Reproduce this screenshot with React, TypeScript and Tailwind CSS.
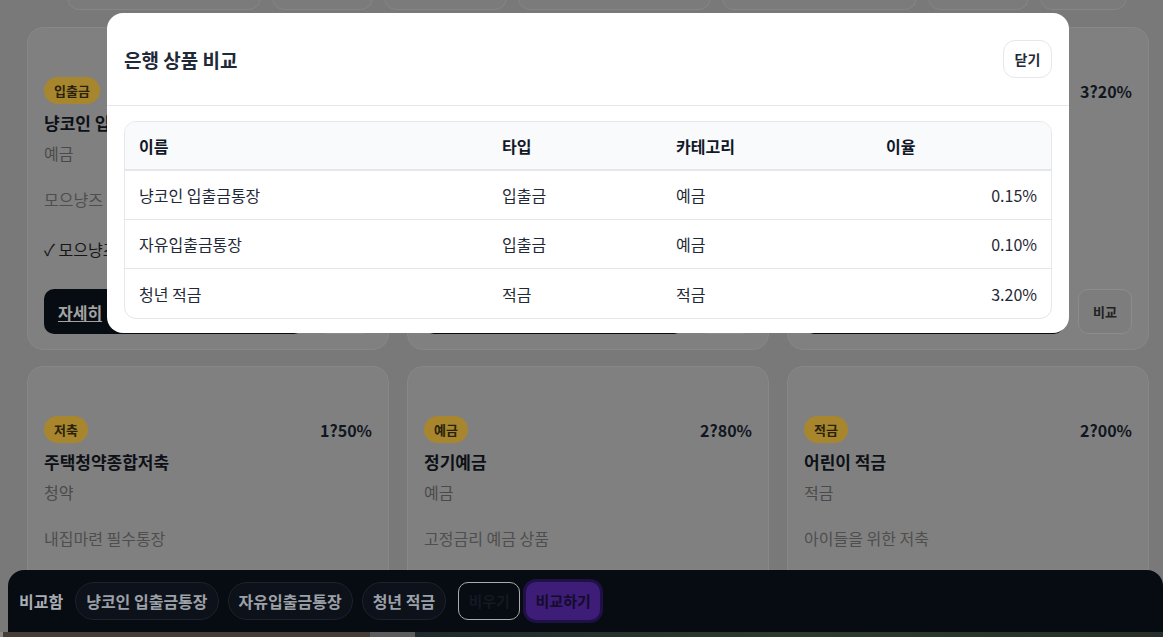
import React from "react";

const font = { fontFamily: '"Noto Sans CJK KR", "Noto Sans", sans-serif' };

const filters = [194, 101, 123, 193, 195, 101, 87];

const products = [
  {
    badge: "입출금",
    rate: "0?15%",
    title: "냥코인 입출금통장",
    cat: "예금",
    desc: "모으냥즈 전용 통장",
    perk: "✓ 모으냥즈 우대금리",
  },
  {
    badge: "입출금",
    rate: "0?10%",
    title: "자유입출금통장",
    cat: "예금",
    desc: "언제든 자유롭게",
    perk: "✓ 수수료 면제",
  },
  {
    badge: "적금",
    rate: "3?20%",
    title: "청년 적금",
    cat: "적금",
    desc: "청년을 위한 고금리 적금",
    perk: "✓ 비과세 혜택",
  },
  { badge: "저축", rate: "1?50%", title: "주택청약종합저축", cat: "청약", desc: "내집마련 필수통장", perk: "✓ 소득공제" },
  { badge: "예금", rate: "2?80%", title: "정기예금", cat: "예금", desc: "고정금리 예금 상품", perk: "✓ 예금자 보호" },
  { badge: "적금", rate: "2?00%", title: "어린이 적금", cat: "적금", desc: "아이들을 위한 저축", perk: "✓ 자녀 우대" },
];

const rows = [
  { name: "냥코인 입출금통장", type: "입출금", cat: "예금", rate: "0.15%" },
  { name: "자유입출금통장", type: "입출금", cat: "예금", rate: "0.10%" },
  { name: "청년 적금", type: "적금", cat: "적금", rate: "3.20%" },
];

const ProductCard = ({ p }: { p: (typeof products)[number] }) => (
  <div className="h-[323px] rounded-2xl border border-[#878787] bg-[#808080] px-4 pt-[49px] pb-[15px] flex flex-col">
    <div className="flex items-center justify-between">
      <span className="h-[27px] px-[10px] rounded-full bg-[#a8862e] text-[#2a220b] text-[13px] font-bold flex items-center">
        {p.badge}
      </span>
      <span className="text-[16px] font-bold text-[#111720]">{p.rate}</span>
    </div>
    <div className="mt-[6px] text-[17px] leading-[26px] font-bold text-[#0d1016]">{p.title}</div>
    <div className="mt-[4px] text-[16px] leading-[26px] text-[#4a4a4a]">{p.cat}</div>
    <div className="mt-[20px] text-[16px] leading-[26px] text-[#4e4e4e]">{p.desc}</div>
    <div className="mt-[24px] text-[16px] leading-[26px] text-[#161616]">{p.perk}</div>
    <div className="mt-auto flex gap-[14px]">
      <div className="flex-1 h-[45px] rounded-[10px] bg-[#070b12] flex items-center px-[14px]">
        <span className="text-[16px] font-bold text-[#a3a3a3] underline underline-offset-2">자세히</span>
      </div>
      <div className="w-[54px] h-[45px] rounded-[10px] border border-[#8c8c8c] bg-[#7d7d7d] flex items-center justify-center text-[13px] font-bold text-[#222]">
        비교
      </div>
    </div>
  </div>
);

const App = () => {
  return (
    <div className="relative w-full h-[637px] overflow-hidden bg-[#797979]" style={font}>
      {/* page, scrolled */}
      <div className="flex gap-[11px] pl-[67px] -mt-[30px]">
        {filters.map((w, i) => (
          <div
            key={i}
            className="h-10 rounded-xl border border-[#868686] bg-[#7b7b7b]"
            style={{ width: w }}
          />
        ))}
      </div>
      <div className="grid grid-cols-3 gap-x-[18px] gap-y-4 pl-[27px] pr-[14px] mt-[17px]">
        {products.map((p, i) => (
          <ProductCard key={i} p={p} />
        ))}
      </div>

      {/* compare bar */}
      <div className="absolute left-2 right-0 bottom-[5px] h-[62px] rounded-t-2xl bg-[#070b12] flex items-center pl-[11px]">
        <span className="text-[16px] font-bold text-[#a9adb4] mr-[12px]">비교함</span>
        {["냥코인 입출금통장", "자유입출금통장", "청년 적금"].map((c) => (
          <span
            key={c}
            className="h-[38px] px-[10px] mr-[9px] rounded-full border border-[#1d222c] bg-[#0d1119] text-[16px] font-bold text-[#9ca0a7] flex items-center"
          >
            {c}
          </span>
        ))}
        <span className="ml-[3px] h-[38px] w-[62px] rounded-[10px] border border-[#a9abaf] text-[15px] font-bold text-[#141922] flex items-center justify-center">
          비우기
        </span>
        <span className="ml-[6px] h-[38px] w-[74px] rounded-[10px] bg-[#3d1d78] ring-[3px] ring-[#1f1145] text-[15px] font-bold text-[#150b2a] flex items-center justify-center">
          비교하기
        </span>
      </div>
      <div className="absolute left-0 right-0 bottom-0 h-[5px] flex">
        <div className="w-[3px] bg-[#8a8a8a]" />
        <div className="w-[367px] bg-[#463d34]" />
        <div className="w-[45px] bg-[#5c5c5c]" />
        <div className="flex-1 bg-gradient-to-r from-[#1f2a2c] via-[#2d3b2c] to-[#263028]" />
      </div>

      {/* modal */}
      <div className="absolute left-[107px] top-[13px] w-[962px] h-[320px] rounded-2xl bg-white flex flex-col">
        <div className="h-[93px] shrink-0 px-[17px] flex items-center justify-between border-b border-[#e5e7eb]">
          <h2 className="mt-[3px] text-[19px] font-bold text-[#1f2937]">은행 상품 비교</h2>
          <button className="w-[49px] h-[38px] rounded-xl border border-[#e5e7eb] text-[14px] font-semibold text-[#1f2937]">
            닫기
          </button>
        </div>
        <div className="px-[17px] pt-[15px]">
          <div className="rounded-xl border border-[#e5e7eb] overflow-hidden text-[16px]">
            <div className="grid grid-cols-[363px_174px_210px_1fr] h-[49px] items-center bg-[#f9fafb] border-b-2 border-[#e5e7eb] font-bold text-[#111827]">
              <div className="px-[14px]">이름</div>
              <div className="px-[14px]">타입</div>
              <div className="px-[14px]">카테고리</div>
              <div className="px-[14px]">이율</div>
            </div>
            {rows.map((r, i) => (
              <div
                key={r.name}
                className={`grid grid-cols-[363px_174px_210px_1fr] h-[49px] items-center text-[#1f2937] ${
                  i < rows.length - 1 ? "border-b border-[#e5e7eb]" : ""
                }`}
              >
                <div className="px-[14px]">{r.name}</div>
                <div className="px-[14px]">{r.type}</div>
                <div className="px-[14px]">{r.cat}</div>
                <div className="px-[14px] text-right">{r.rate}</div>
              </div>
            ))}
          </div>
        </div>
      </div>
    </div>
  );
};

export default App;
